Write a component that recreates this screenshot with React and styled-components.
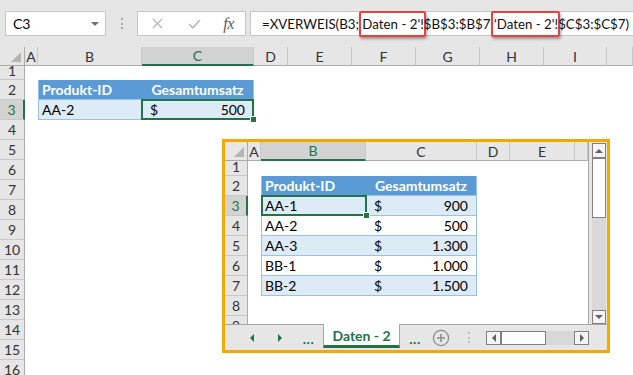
import React from "react";
import styled, { createGlobalStyle, css } from "styled-components";

const FONT = `Lato, "Open Sans", "Liberation Sans", sans-serif`;
const GREEN = "#217346";

const GlobalStyle = createGlobalStyle`
  html, body { margin: 0; padding: 0; background: #fff; }
  body { font-family: ${FONT}; }
  *, *::before, *::after { box-sizing: border-box; }
`;

const Frame = styled.div`
  width: 633px;
  height: 375px;
  overflow: hidden;
  background: #fff;
  display: flex;
  flex-direction: column;
  font-family: ${FONT};
  color: #000;
`;

/* ---------- formula bar ---------- */
const TopBar = styled.div`
  flex: none;
  height: 47px;
  background: #e6e6e6;
  display: flex;
  align-items: flex-start;
  padding: 11px 0 0 5px;
`;

const NameBox = styled.div`
  width: 101px;
  height: 25px;
  background: #fff;
  border: 1px solid #c6c6c6;
  display: flex;
  align-items: center;
  justify-content: space-between;
  padding: 0 6px 0 7px;
  font-size: 14px;
`;

const DropArrow = styled.span`
  width: 0;
  height: 0;
  border-left: 4px solid transparent;
  border-right: 4px solid transparent;
  border-top: 4px solid #707070;
`;

const Grip = styled.div`
  width: 31px;
  height: ${(p) => (p.$auto ? "auto" : "25px")};
  display: flex;
  flex-direction: column;
  align-items: center;
  justify-content: center;
  gap: ${(p) => p.$gap || 2}px;
`;

const GripDot = styled.span`
  width: 2px;
  height: 2px;
  background: ${(p) => p.$color || "#a8a8a8"};
`;

const ButtonBox = styled.div`
  width: 109px;
  height: 25px;
  background: #fff;
  border: 1px solid #c6c6c6;
  display: flex;
  align-items: center;
`;

const ButtonSlot = styled.div`
  width: ${(p) => p.$w}px;
  height: 100%;
  display: flex;
  align-items: center;
  justify-content: center;
`;

const Fx = styled.span`
  font-family: "Liberation Serif", serif;
  font-style: italic;
  font-size: 16px;
  color: #5c5c5c;
  letter-spacing: -0.5px;
`;

const FormulaInput = styled.div`
  flex: 1;
  margin-left: 4px;
  height: 25px;
  background: #fff;
  border: 1px solid #c6c6c6;
  border-right: none;
  padding-left: 11px;
  display: flex;
  align-items: stretch;
  font-size: 13.3px;
  white-space: pre;
  color: #111;
`;

const Seg = styled.span`
  display: flex;
  align-items: center;
  position: relative;
  ${(p) =>
    p.$mark &&
    css`
      &::after {
        content: "";
        position: absolute;
        left: -3px;
        right: -2px;
        top: -1px;
        bottom: -2px;
        border: 2.5px solid #e8413f;
        border-radius: 2px;
        box-shadow: 1px 2px 3px rgba(0, 0, 0, 0.35);
      }
    `}
`;

/* ---------- sheet grid ---------- */
const SheetArea = styled.div`
  flex: 1;
  position: relative;
`;

const Grid = styled.div`
  display: grid;
  grid-template-columns: ${(p) => p.$cols};
  grid-template-rows: ${(p) => p.$rows};
  align-content: start;
  overflow: hidden;
  height: 100%;
  font-size: 14px;
`;

const Corner = styled.div`
  background: #e6e6e6;
  border-right: 1px solid #ababab;
  border-bottom: 1px solid #ababab;
  display: flex;
  align-items: flex-end;
  justify-content: flex-end;
  padding: 0 3px 3px 0;
`;

const CornerTri = styled.span`
  width: 0;
  height: 0;
  border-left: 10px solid transparent;
  border-bottom: 10px solid #b4b4b4;
`;

const ColHead = styled.div`
  background: ${(p) => (p.$active ? "#d2d2d2" : "#e6e6e6")};
  color: ${(p) => (p.$active ? GREEN : "#333")};
  border-right: 1px solid #c8c8c8;
  border-bottom: ${(p) => (p.$active ? `2px solid ${GREEN}` : "1px solid #ababab")};
  display: flex;
  align-items: center;
  justify-content: center;
  overflow: hidden;
`;

const RowHead = styled.div`
  background: ${(p) => (p.$active ? "#d2d2d2" : "#e6e6e6")};
  color: ${(p) => (p.$active ? GREEN : "#333")};
  border-right: ${(p) => (p.$active ? `2px solid ${GREEN}` : "1px solid #ababab")};
  border-bottom: 1px solid #c8c8c8;
  display: flex;
  align-items: ${(p) => (p.$clip ? "flex-end" : "center")};
  justify-content: center;
  overflow: hidden;
  line-height: ${(p) => (p.$clip ? "17px" : "20px")};
`;

const Cell = styled.div`
  position: relative;
  display: flex;
  align-items: center;
  padding: 0 3px;
  white-space: nowrap;
  min-width: 0;
  ${(p) => p.$kind === "head" && css`background: #5b9bd5; color: #fff; font-weight: 700;`}
  ${(p) => p.$kind === "band" && css`background: #ddebf7;`}
  ${(p) => p.$kind && css`border-bottom: 1px solid #9bc2e6;`}
  ${(p) => p.$kind && p.$first && css`border-left: 1px solid #9bc2e6;`}
  ${(p) => p.$kind && p.$last && css`border-right: 1px solid #9bc2e6;`}
  ${(p) => p.$center && css`justify-content: center;`}
  ${(p) => p.$money && css`justify-content: space-between; padding: 0 8px 0 8px;`}
  ${(p) =>
    p.$selected &&
    css`
      &::before {
        content: "";
        position: absolute;
        inset: -1px -1px -1px -1px;
        border: 2px solid ${GREEN};
        z-index: 1;
      }
      &::after {
        content: "";
        position: absolute;
        right: -4px;
        bottom: -4px;
        width: 7px;
        height: 7px;
        background: ${GREEN};
        border: 1px solid #fff;
        z-index: 2;
      }
    `}
`;

function Sheet({ cols, widths, rowList, rowHeights, activeCol, activeRow, cells }) {
  const colTpl = widths.map((w) => `${w}px`).join(" ");
  const rowTpl = rowHeights.map((h) => `${h}px`).join(" ");
  const out = [
    <Corner key="corner">
      <CornerTri />
    </Corner>,
  ];
  cols.forEach((c, i) =>
    out.push(
      <ColHead key={`h${i}`} $active={c === activeCol}>
        {c}
      </ColHead>
    )
  );
  rowList.forEach((r, ri) => {
    out.push(
      <RowHead key={`r${r}`} $active={r === activeRow} $clip={ri === 0}>
        {r}
      </RowHead>
    );
    cols.forEach((c, ci) => {
      const d = cells[`${c}${r}`];
      if (!d) {
        out.push(<Cell key={`${ci}-${r}`} />);
        return;
      }
      out.push(
        <Cell
          key={`${ci}-${r}`}
          $kind={d.kind}
          $first={d.first}
          $last={d.last}
          $center={d.center}
          $money={d.money !== undefined}
          $selected={d.selected}
        >
          {d.money !== undefined ? (
            <>
              <span>$</span>
              <span>{d.money}</span>
            </>
          ) : (
            d.text
          )}
        </Cell>
      );
    });
  });
  return (
    <Grid $cols={colTpl} $rows={rowTpl}>
      {out}
    </Grid>
  );
}

/* ---------- embedded window ---------- */
const Window = styled.div`
  position: absolute;
  left: 222px;
  top: 92px;
  width: 388px;
  height: 214px;
  border: 3px solid #f3a900;
  background: #fff;
  display: grid;
  grid-template-columns: 363px 19px;
  grid-template-rows: 182px 26px;
  overflow: hidden;
`;

const VScroll = styled.div`
  background: #e6e6e6;
  border-left: 1px solid #a6a6a6;
  padding: 1px 1px 0 3px;
  display: flex;
  flex-direction: column;
`;

const ScrollBtn = styled.div`
  flex: none;
  ${(p) => (p.$vertical ? css`height: ${p.$size}px;` : css`width: ${p.$size}px;`)}
  background: #f4f4f4;
  border: 1px solid #808080;
  display: flex;
  align-items: center;
  justify-content: center;
`;

const Thumb = styled.div`
  flex: none;
  ${(p) => (p.$vertical ? css`height: ${p.$size}px;` : css`width: ${p.$size}px;`)}
  background: #fff;
  border: 1px solid #808080;
`;

const Track = styled.div`
  flex: 1;
  background: #d8d8d8;
`;

const Tri = styled.span`
  width: 0;
  height: 0;
  ${(p) =>
    p.$dir === "up" &&
    css`border-left: 4px solid transparent; border-right: 4px solid transparent; border-bottom: 4px solid ${p.$c};`}
  ${(p) =>
    p.$dir === "down" &&
    css`border-left: 4px solid transparent; border-right: 4px solid transparent; border-top: 4px solid ${p.$c};`}
  ${(p) =>
    p.$dir === "left" &&
    css`border-top: ${p.$s}px solid transparent; border-bottom: ${p.$s}px solid transparent; border-right: ${p.$s}px solid ${p.$c};`}
  ${(p) =>
    p.$dir === "right" &&
    css`border-top: ${p.$s}px solid transparent; border-bottom: ${p.$s}px solid transparent; border-left: ${p.$s}px solid ${p.$c};`}
`;

const TabBar = styled.div`
  grid-column: 1 / span 2;
  background: #e6e6e6;
  border-top: 1px solid #a6a6a6;
  display: flex;
  align-items: stretch;
  padding-left: 13px;
`;

const TabSlot = styled.div`
  width: ${(p) => p.$w}px;
  flex: none;
  display: flex;
  align-items: center;
  justify-content: center;
`;

const Dots = styled.span`
  color: ${GREEN};
  font-weight: 700;
  font-size: 14px;
  letter-spacing: 0.5px;
  padding-top: 2px;
`;

const Tab = styled.div`
  width: 77px;
  flex: none;
  margin-top: -1px;
  margin-bottom: 2px;
  background: #fff;
  border-left: 1px solid #a6a6a6;
  border-right: 1px solid #a6a6a6;
  border-bottom: 3px solid ${GREEN};
  display: flex;
  align-items: center;
  justify-content: center;
  color: ${GREEN};
  font-weight: 700;
  font-size: 14px;
  padding-top: 2px;
  white-space: pre;
`;

const HScroll = styled.div`
  width: 103px;
  height: 14px;
  margin-top: 6px;
  flex: none;
  display: flex;
`;

const mainCols = ["A", "B", "C", "D", "E", "F", "G", "H", "I", ""];
const mainWidths = [25, 13, 104, 112, 34, 64, 64, 64, 64, 63, 26];
const mainRows = Array.from({ length: 16 }, (_, i) => i + 1);
const mainHeights = [19, 14, ...Array(15).fill(20)];
const mainCells = {
  B2: { kind: "head", text: "Produkt-ID", first: true },
  C2: { kind: "head", text: "Gesamtumsatz", last: true, center: true },
  B3: { kind: "band", text: "AA-2", first: true },
  C3: { kind: "band", money: "500", last: true, selected: true },
};

const embCols = ["A", "B", "C", "D", "E", ""];
const embWidths = [23, 13, 105, 111, 33, 65, 13];
const embRows = [1, 2, 3, 4, 5, 6, 7, 8, 9];
const embHeights = [19, 15, ...Array(8).fill(20)];
const embData = [
  ["AA-1", "900"],
  ["AA-2", "500"],
  ["AA-3", "1.300"],
  ["BB-1", "1.000"],
  ["BB-2", "1.500"],
];
const embCells = {
  B2: { kind: "head", text: "Produkt-ID", first: true },
  C2: { kind: "head", text: "Gesamtumsatz", last: true, center: true },
};
embData.forEach(([id, v], i) => {
  const r = i + 3;
  const kind = i % 2 === 0 ? "band" : "plain";
  embCells[`B${r}`] = { kind, text: id, first: true, selected: i === 0 };
  embCells[`C${r}`] = { kind, money: v, last: true };
});

export default function App() {
  return (
    <>
      <GlobalStyle />
      <Frame>
        <TopBar>
          <NameBox>
            <span>C3</span>
            <DropArrow />
          </NameBox>
          <Grip $gap={2.5}>
            <GripDot />
            <GripDot />
            <GripDot />
          </Grip>
          <ButtonBox>
            <ButtonSlot $w={38}>
              <svg width="11" height="11" viewBox="0 0 11 11">
                <path d="M1 1L10 10M10 1L1 10" stroke="#b9b9b9" strokeWidth="1.4" fill="none" />
              </svg>
            </ButtonSlot>
            <ButtonSlot $w={36}>
              <svg width="13" height="10" viewBox="0 0 13 10">
                <path d="M1 5L4.8 8.8L12 1" stroke="#b9b9b9" strokeWidth="1.5" fill="none" />
              </svg>
            </ButtonSlot>
            <ButtonSlot $w={33}>
              <Fx>fx</Fx>
            </ButtonSlot>
          </ButtonBox>
          <FormulaInput>
            <Seg>=XVERWEIS(B3; </Seg>
            <Seg $mark>Daten - 2'!</Seg>
            <Seg>$B$3:$B$7;</Seg>
            <Seg $mark>'Daten - 2'!</Seg>
            <Seg>$C$3:$C$7)</Seg>
          </FormulaInput>
        </TopBar>
        <SheetArea>
          <Sheet
            cols={mainCols}
            widths={mainWidths}
            rowList={mainRows}
            rowHeights={mainHeights}
            activeCol="C"
            activeRow={3}
            cells={mainCells}
          />
          <Window>
            <Sheet
              cols={embCols}
              widths={embWidths}
              rowList={embRows}
              rowHeights={embHeights}
              activeCol="B"
              activeRow={3}
              cells={embCells}
            />
            <VScroll>
              <ScrollBtn $vertical $size={15}>
                <Tri $dir="up" $c="#606060" />
              </ScrollBtn>
              <Thumb $vertical $size={60} />
              <Track />
              <ScrollBtn $vertical $size={14}>
                <Tri $dir="down" $c="#606060" />
              </ScrollBtn>
            </VScroll>
            <TabBar>
              <TabSlot $w={28}>
                <Tri $dir="left" $s={4} $c={GREEN} />
              </TabSlot>
              <TabSlot $w={28}>
                <Tri $dir="right" $s={4} $c={GREEN} />
              </TabSlot>
              <TabSlot $w={29}>
                <Dots>...</Dots>
              </TabSlot>
              <Tab>Daten - 2</Tab>
              <TabSlot $w={30}>
                <Dots>...</Dots>
              </TabSlot>
              <TabSlot $w={22}>
                <svg width="18" height="18" viewBox="0 0 18 18">
                  <circle cx="9" cy="9" r="7.6" stroke="#8c8c8c" strokeWidth="1.3" fill="none" />
                  <path d="M9 5V13M5 9H13" stroke="#8c8c8c" strokeWidth="1.6" />
                </svg>
              </TabSlot>
              <TabSlot $w={34}>
                <Grip $gap={2.5} $auto>
                  <GripDot $color="#bdbdbd" />
                  <GripDot $color="#bdbdbd" />
                  <GripDot $color="#bdbdbd" />
                </Grip>
              </TabSlot>
              <HScroll>
                <ScrollBtn $size={15}>
                  <Tri $dir="left" $s={4} $c="#606060" />
                </ScrollBtn>
                <Thumb $size={45} />
                <Track />
                <ScrollBtn $size={15}>
                  <Tri $dir="right" $s={4} $c="#606060" />
                </ScrollBtn>
              </HScroll>
            </TabBar>
          </Window>
        </SheetArea>
      </Frame>
    </>
  );
}
